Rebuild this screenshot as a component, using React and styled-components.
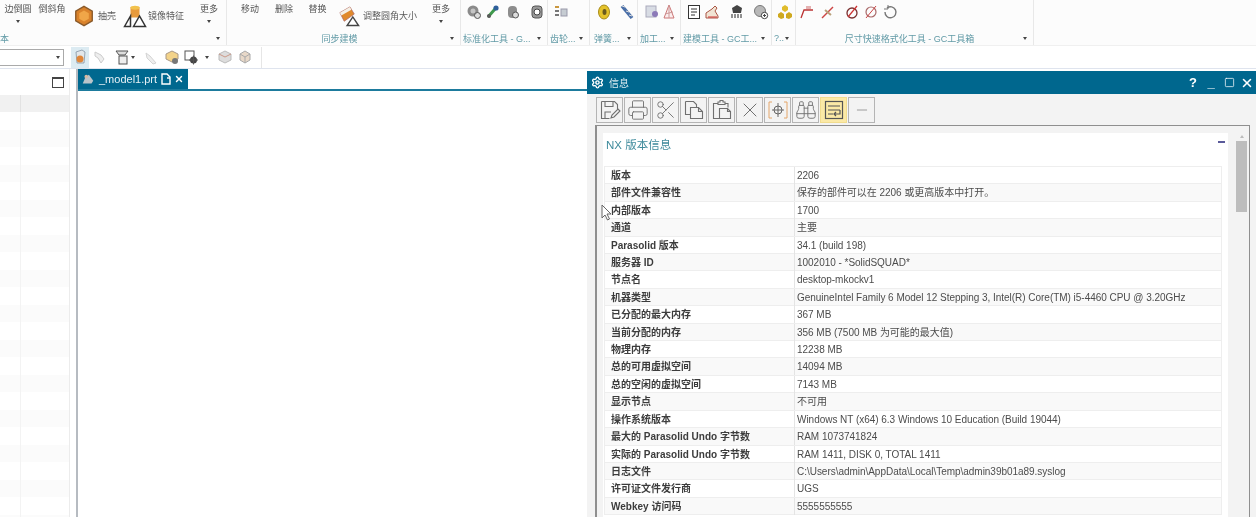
import React from "react";
import styled, { createGlobalStyle } from "styled-components";
import { Printer, Scissors, X, Binoculars, Minus, Settings, Square } from "lucide-react";

const Global = createGlobalStyle`
  html, body { margin: 0; padding: 0; background: #fff; }
  body { font-family: "Liberation Sans", "Noto Sans CJK SC", sans-serif; }
`;

const Root = styled.div`
  position: relative;
  width: 1256px;
  height: 517px;
  overflow: hidden;
  display: flex;
  flex-direction: column;
  background: #fff;
  filter: blur(0.4px);
`;

const Ribbon = styled.div`
  height: 46px;
  flex: none;
  display: flex;
  background: #fcfcfc;
  border-bottom: 1px solid #f0f0f0;
  box-sizing: border-box;
`;

const Group = styled.div`
  width: ${(p) => p.$w}px;
  flex: none;
  display: flex;
  flex-direction: column;
  box-sizing: border-box;
  border-right: ${(p) => (p.$last ? "none" : "1px solid #e8e8e8")};
`;

const Items = styled.div`
  height: 31px;
  display: flex;
  align-items: ${(p) => (p.$big ? "center" : "flex-start")};
  padding-top: ${(p) => (p.$big ? 0 : 4)}px;
  box-sizing: border-box;
`;

const TextItem = styled.div`
  width: ${(p) => p.$w || 34}px;
  margin-left: ${(p) => p.$ml || 0}px;
  flex: none;
  height: 31px;
  padding-top: 3px;
  box-sizing: border-box;
  display: flex;
  flex-direction: column;
  align-items: center;
  gap: 5px;
  font-size: 9px;
  line-height: 12px;
  color: #555;
  white-space: nowrap;
`;

const InlineText = styled.span`
  margin-left: ${(p) => p.$ml || 0}px;
  flex: none;
  font-size: 9px;
  color: #5a5a5a;
  white-space: nowrap;
`;

const Slot = styled.span`
  margin-left: ${(p) => p.$ml || 0}px;
  width: ${(p) => p.$s || 16}px;
  height: ${(p) => p.$s || 16}px;
  flex: none;
  display: inline-flex;
`;

const Arrow = styled.i`
  display: block;
  flex: none;
  width: 0;
  height: 0;
  margin-left: ${(p) => p.$ml || 0}px;
  border-left: 2.5px solid transparent;
  border-right: 2.5px solid transparent;
  border-top: 3px solid #444;
`;

const LabelRow = styled.div`
  height: 14px;
  display: flex;
  align-items: center;
  padding: 0 6px 0 ${(p) => p.$pad ?? 2}px;
  font-size: 9px;
  color: #619aa6;
  white-space: nowrap;
`;

const LabelText = styled.span`
  flex: 1;
  min-width: 0;
  overflow: hidden;
  text-align: ${(p) => (p.$center ? "center" : "left")};
`;

const Bar = styled.div`
  height: 22px;
  flex: none;
  display: flex;
  align-items: center;
  background: #fff;
`;

const Combo = styled.div`
  width: 64px;
  height: 17px;
  flex: none;
  display: flex;
  align-items: center;
  justify-content: flex-end;
  padding-right: 3px;
  box-sizing: border-box;
  border: 1px solid #aaa;
  border-left: none;
`;

const ActiveTile = styled.span`
  margin-left: 7px;
  width: 18px;
  height: 21px;
  flex: none;
  display: flex;
  align-items: center;
  justify-content: center;
  background: #dcebf2;
`;

const BarEnd = styled.span`
  margin-left: 8px;
  width: 1px;
  height: 21px;
  background: #e6e6e6;
`;

const Main = styled.div`
  flex: 1;
  min-height: 0;
  display: flex;
  border-top: 1px solid #dfe4ee;
`;

const LeftPanel = styled.div`
  width: 70px;
  flex: none;
  display: flex;
  flex-direction: column;
  box-sizing: border-box;
  border-right: 1px solid #ececec;
`;

const PanelHead = styled.div`
  height: 26px;
  flex: none;
  display: flex;
  align-items: center;
  justify-content: flex-end;
  padding-right: 5px;
`;

const WindowIcon = styled.span`
  width: 10px;
  height: 8px;
  border: 1px solid #444;
  border-top-width: 2px;
`;

const TreeRow = styled.div`
  height: ${(p) => (p.$head ? 17 : 17.5)}px;
  flex: none;
  display: grid;
  grid-template-columns: 21px 1fr;
  background: ${(p) => (p.$head ? "#f1f1f1" : p.$odd ? "#fbfbfb" : "#fff")};
`;

const TreeCell = styled.div`
  border-right: 1px solid ${(p) => (p.$head ? "#e2e2e2" : "#f3f3f3")};
`;

const Workspace = styled.div`
  width: 511px;
  margin-left: 6px;
  flex: none;
  display: flex;
  flex-direction: column;
  border-left: 2px solid #b6bbc1;
  box-sizing: border-box;
`;

const TabStrip = styled.div`
  height: 22px;
  flex: none;
  box-sizing: border-box;
  border-bottom: 2px solid #1d7b9d;
`;

const Tab = styled.div`
  width: 110px;
  height: 20px;
  display: flex;
  align-items: center;
  background: #00688f;
  color: #e8f2f6;
  font-size: 11px;
`;

const TabName = styled.span`
  margin-left: 4px;
`;

const Dialog = styled.div`
  flex: 1;
  min-width: 0;
  margin-top: 2px;
  display: flex;
  flex-direction: column;
  background: #f3f3f3;
`;

const TitleBar = styled.div`
  height: 23px;
  flex: none;
  display: flex;
  align-items: center;
  padding-left: 4px;
  background: #00678e;
  color: #dcebf1;
  font-size: 10px;
`;

const TitleText = styled.span`
  margin-left: 5px;
  flex: 1;
`;

const TitleBtn = styled.span`
  width: ${(p) => p.$w}px;
  display: flex;
  justify-content: center;
  color: #fff;
  font-size: 13px;
  line-height: 14px;
  font-weight: 700;
`;

const DlgTools = styled.div`
  height: 31px;
  flex: none;
  display: flex;
  align-items: center;
  gap: 1px;
  padding-left: 9px;
  box-sizing: border-box;
`;

const ToolBtn = styled.span`
  width: 27px;
  height: 26px;
  flex: none;
  box-sizing: border-box;
  display: flex;
  align-items: center;
  justify-content: center;
  color: #707070;
  border: 1px solid ${(p) => (p.$on ? "#f1dc8e" : "#b4b4b4")};
  background: ${(p) => (p.$on ? "#fbe9a6" : "#f3f3f3")};
`;

const Frame = styled.div`
  flex: 1;
  min-height: 0;
  margin: 0 6px 0 8px;
  display: flex;
  box-sizing: border-box;
  border: 1px solid #8f8f8f;
  border-left-width: 2px;
  border-bottom: none;
  padding: 7px 0 0 6px;
`;

const Sheet = styled.div`
  position: relative;
  width: 625px;
  flex: none;
  background: #fff;
  padding-left: 1px;
  box-sizing: border-box;
`;

const SheetTitle = styled.div`
  height: 33px;
  padding: 5px 0 0 2px;
  box-sizing: border-box;
  font-size: 11.5px;
  line-height: 14px;
  color: #3f8b9c;
`;

const Collapse = styled.span`
  position: absolute;
  top: 8px;
  right: 3px;
  width: 7px;
  height: 2px;
  background: #5a5a9a;
`;

const Table = styled.div`
  width: 618px;
  border: 1px solid #eeeeee;
  border-bottom: none;
  box-sizing: border-box;
`;

const Row = styled.div`
  height: 17.42px;
  display: grid;
  grid-template-columns: 190px 1fr;
  box-sizing: border-box;
  border-bottom: 1px solid #eeeeee;
  background: ${(p) => (p.$alt ? "#f9f9f9" : "#fff")};
`;

const KeyCell = styled.div`
  padding-left: 6px;
  border-right: 1px solid #e4e4e4;
  font-size: 10px;
  font-weight: 700;
  line-height: 17px;
  color: #3c3c3c;
  white-space: nowrap;
`;

const ValCell = styled.div`
  padding-left: 2px;
  font-size: 10px;
  line-height: 17px;
  color: #4c4c4c;
  white-space: nowrap;
  letter-spacing: -0.03px;
`;

const Scroll = styled.div`
  margin-left: 8px;
  width: 11px;
  flex: none;
  display: flex;
  flex-direction: column;
  align-items: center;
`;

const ScrollUp = styled.i`
  margin-top: 2px;
  width: 0;
  height: 0;
  border-left: 2.5px solid transparent;
  border-right: 2.5px solid transparent;
  border-bottom: 3px solid #bbb;
`;

const Thumb = styled.div`
  margin-top: 3px;
  width: 11px;
  height: 71px;
  background: #bdbdbd;
`;

const Pointer = styled.svg`
  position: absolute;
  left: 601px;
  top: 204px;
  pointer-events: none;
`;

const G = ({ children, s = 16 }) => (
  <svg width={s} height={s} viewBox="0 0 16 16" style={{ display: "block" }}>{children}</svg>
);

const glyphs = {
  shell: <><path d="M8 1l6 3.5v7L8 15l-6-3.5v-7z" fill="#d9822b" stroke="#8a5a2a" /><path d="M8 4l3.5 2v4L8 12l-3.5-2V6z" fill="#f0a648" /></>,
  mirror: <><path d="M5 2h6v7H5z" fill="#e79a3c" /><ellipse cx="8" cy="2.5" rx="3" ry="1.3" fill="#f2c24d" /><path d="M1 15l4-7v7zM7 15l4-7 4 7z" fill="#fff" stroke="#333" /></>,
  blend: <><path d="M2 6l7-4 3 5-7 5z" fill="#e08a2c" stroke="#a66" strokeWidth=".5" /><path d="M2 6l7-4 1 2-7 4z" fill="#f4f0e8" /><path d="M7 15l4-6 4 6z" fill="#fff" stroke="#444" /></>,
  gearA: <><circle cx="7" cy="7" r="5.5" fill="#8b8b8b" /><circle cx="7" cy="7" r="2.5" fill="#c5c5c5" /><circle cx="11.5" cy="11.5" r="3" fill="#ddd" stroke="#555" /></>,
  wrench: <><path d="M3 13l7-8" stroke="#3f9a4c" strokeWidth="3" /><circle cx="11" cy="4" r="2.6" fill="#2e5f9a" /><circle cx="4" cy="12" r="2" fill="#5a5a5a" /></>,
  cyl: <><rect x="3" y="2" width="9" height="12" rx="4" fill="#8d8d8d" /><circle cx="10.5" cy="11" r="3" fill="#ddd" stroke="#555" /></>,
  dial: <><rect x="3" y="2" width="10" height="12" rx="3" fill="#999" stroke="#555" /><circle cx="8" cy="8" r="3" fill="#fff" stroke="#444" /></>,
  teeth: <><rect x="2" y="2" width="4" height="2" fill="#c9973f" /><rect x="2" y="6" width="4" height="2" fill="#777" /><rect x="2" y="10" width="4" height="2" fill="#777" /><rect x="8" y="5" width="6" height="7" fill="#c6ccd2" stroke="#99a" /></>,
  coil: <><ellipse cx="8" cy="8" rx="5.5" ry="7" fill="#e4c22a" stroke="#a98d1a" /><ellipse cx="8.5" cy="8" rx="2" ry="3" fill="#6a5a1c" /></>,
  spring: <><path d="M3 2l10 12" stroke="#4a6fa8" strokeWidth="3.5" /><path d="M3 2l3 1M7 7l3 1M10 11l3 1" stroke="#ddd" /></>,
  part: <><rect x="2" y="2" width="10" height="11" fill="#d8dce4" stroke="#aab" /><circle cx="11" cy="10" r="3" fill="#8c7ab8" /></>,
  cone: <><path d="M8 1L3 14h10z" fill="#fbeeee" stroke="#c77" /><path d="M8 1v13M4 10l8-2" stroke="#c99" /></>,
  doc: <><rect x="2.5" y="1.5" width="11" height="13" fill="#fff" stroke="#333" /><path d="M5 5h6M5 8h6M5 11h4" stroke="#333" /></>,
  tool: <><path d="M2 14V9l6-4 3-3 2 2-2 3 3 5v2z" fill="#f1e4d4" stroke="#a54" /><path d="M4 13h9" stroke="#c33" /></>,
  block: <><path d="M3 4l5-3 5 3-1 5H4z" fill="#444" /><path d="M2 10h12v4H2z" fill="#fff" /><path d="M3 10v4M6 10v4M9 10v4M12 10v4" stroke="#222" /></>,
  ball: <><circle cx="7" cy="7" r="5.5" fill="#b8b8b8" stroke="#777" /><circle cx="11.5" cy="11.5" r="3.2" fill="#fff" stroke="#444" /><path d="M10 11.5h3M11.5 10v3" stroke="#444" /></>,
  cubes: <><path d="M8 1l3 2v3l-3 2-3-2V3z" fill="#e0bc2c" /><path d="M4 8l3 2v4l-3 1-3-2v-3zM12 8l3 2v3l-3 2-3-1v-4z" fill="#cfa91f" /></>,
  flag: <><path d="M2 14l3-8h9" fill="none" stroke="#b33" strokeWidth="1.3" /><path d="M7 3h5M7 5h5" stroke="#c66" /></>,
  dim: <><path d="M2 14L13 3" stroke="#c44" strokeWidth="1.5" /><path d="M5 6l6 5" stroke="#b8a07a" strokeWidth="2" /></>,
  circle: <><circle cx="8" cy="9" r="5" fill="none" stroke="#7a3030" strokeWidth="1.3" /><path d="M4 13l9-11" stroke="#c33" strokeWidth="1.2" /></>,
  circle2: <><circle cx="8" cy="8" r="5" fill="none" stroke="#aa6a6a" strokeWidth="1.2" /><path d="M3 14L13 2" stroke="#c44" /></>,
  undo: <><path d="M5 4a5.5 5.5 0 1 1-2 4" fill="none" stroke="#777" strokeWidth="1.4" /><path d="M6 1v4H2" fill="none" stroke="#777" /></>,
  orange: <><path d="M4 3l6-2 3 2-1 11H5z" fill="#e2e7ea" stroke="#789" strokeWidth=".7" /><circle cx="8" cy="10" r="3.5" fill="#e0873a" /></>,
  bone: <><path d="M4 3l6 3 3 4-3 4-3-5-3-2z" fill="#eee" stroke="#ccc" /></>,
  filter: <><path d="M2 2h12l-3 4H5z" fill="#ddd" stroke="#555" /><rect x="5" y="7" width="8" height="8" fill="#eee" stroke="#555" /></>,
  pin: <><path d="M3 4l4 3 6 7-3 1-6-6z" fill="#eee" stroke="#d4d4d4" /></>,
  box: <><path d="M8 2l6 3v5l-6 3-6-3V5z" fill="#f3d38a" stroke="#a98" /><circle cx="11" cy="12" r="3" fill="#777" /></>,
  frame: <><rect x="2" y="2" width="9" height="9" fill="#fff" stroke="#555" /><circle cx="10.5" cy="11" r="3.5" fill="#444" /><path d="M10.5 6.5v9M6 11h9" stroke="#555" /></>,
  cube1: <><path d="M8 2l6 3v6l-6 3-6-3V5z" fill="#ddd" stroke="#bbb" /><path d="M2 5l6 3 6-3" fill="none" stroke="#c98" /></>,
  cube2: <><path d="M8 2l5 3v6l-5 3-5-3V5z" fill="#e8d8c8" stroke="#aaa" /><path d="M8 8v6M3 5l5 3 5-3" fill="none" stroke="#aaa" /></>,
  model: <><path d="M2 13l3-7 4-3 5 7-2 3z" fill="#b9c4ca" /><circle cx="6" cy="5" r="2" fill="#d8b8a0" /></>,
};

const Glyph = ({ n, ml, s }) => (
  <Slot $ml={ml} $s={s}><G s={s || 16}>{glyphs[n]}</G></Slot>
);

const Save = () => (
  <svg width="22" height="22" viewBox="0 0 22 22" fill="none" stroke="#707070" strokeWidth="1.1">
    <path d="M2.5 2.5h13l3 3v5M2.5 2.5v17h8" />
    <path d="M6 2.5v5h8v-5M6 19v-6h6" />
    <path d="M12 19l1-3 6-6 2 2-6 6z" />
  </svg>
);

const CopyDocs = () => (
  <svg width="22" height="22" viewBox="0 0 22 22" fill="none" stroke="#707070" strokeWidth="1.1">
    <path d="M2.5 2.5h8l3 3v3M2.5 2.5v13h5" />
    <path d="M7.5 8.5h8l4 4v7h-12z" />
    <path d="M15.5 8.5v4h4" />
  </svg>
);

const PasteDocs = () => (
  <svg width="22" height="22" viewBox="0 0 22 22" fill="none" stroke="#707070" strokeWidth="1.1">
    <path d="M7 4.5H2.5v15h6M14 4.5h3v4" />
    <path d="M7 5.5V3h2V1.5h3V3h2v2.5z" />
    <path d="M8.5 9.5h8l3 3v7h-11z" />
    <path d="M16.5 9.5v3h3" />
  </svg>
);

const Target = () => (
  <svg width="22" height="22" viewBox="0 0 22 22" fill="none">
    <path d="M5 3H2v16h3M17 3h3v16h-3" stroke="#e4a66a" />
    <circle cx="11" cy="11" r="4" stroke="#666" />
    <path d="M11 4v14M5 11h12" stroke="#666" />
  </svg>
);

const Wrap = () => (
  <svg width="22" height="22" viewBox="0 0 22 22" fill="none" stroke="#555" strokeWidth="1.2">
    <rect x="2.5" y="2.5" width="17" height="17" />
    <path d="M5 7h12M5 11h12M5 15h5M17 11v4h-6M13 13l-2 2 2 2" />
  </svg>
);

const DocIcon = () => (
  <svg width="10" height="12" viewBox="0 0 10 12" fill="none" stroke="#fff" strokeWidth="1.4">
    <path d="M1 1h5l3 3v7H1z" />
    <path d="M6 5h3" />
  </svg>
);

const rows = [
  ["版本", "2206"],
  ["部件文件兼容性", "保存的部件可以在 2206 或更高版本中打开。"],
  ["内部版本", "1700"],
  ["通道", "主要"],
  ["Parasolid 版本", "34.1 (build 198)"],
  ["服务器 ID", "1002010 - *SolidSQUAD*"],
  ["节点名", "desktop-mkockv1"],
  ["机器类型", "GenuineIntel Family 6 Model 12 Stepping 3, Intel(R) Core(TM) i5-4460 CPU @ 3.20GHz"],
  ["已分配的最大内存", "367 MB"],
  ["当前分配的内存", "356 MB (7500 MB 为可能的最大值)"],
  ["物理内存", "12238 MB"],
  ["总的可用虚拟空间", "14094 MB"],
  ["总的空闲的虚拟空间", "7143 MB"],
  ["显示节点", "不可用"],
  ["操作系统版本", "Windows NT (x64) 6.3 Windows 10 Education (Build 19044)"],
  ["最大的 Parasolid Undo 字节数", "RAM 1073741824"],
  ["实际的 Parasolid Undo 字节数", "RAM 1411, DISK 0, TOTAL 1411"],
  ["日志文件", "C:\\Users\\admin\\AppData\\Local\\Temp\\admin39b01a89.syslog"],
  ["许可证文件发行商", "UGS"],
  ["Webkey 访问码", "5555555555"],
];

const Label = ({ text, center, pad }) => (
  <LabelRow $pad={pad}>
    <LabelText $center={center}>{text}</LabelText>
    <Arrow />
  </LabelRow>
);

const More = ({ ml, text = "更多", w }) => (
  <TextItem $ml={ml} $w={w}>{text}<Arrow /></TextItem>
);

const Plain = ({ ml, text, w }) => <TextItem $ml={ml} $w={w}>{text}</TextItem>;

export default function App() {
  return (
    <Root>
      <Global />
      <Ribbon>
        <Group $w={227}>
          <Items $big>
            <More ml={1} text="边倒圆" />
            <Plain text="倒斜角" />
            <Glyph n="shell" s={22} ml={4} />
            <InlineText $ml={3}>抽壳</InlineText>
            <Glyph n="mirror" s={24} ml={7} />
            <InlineText $ml={1}>镜像特征</InlineText>
            <More ml={8} />
          </Items>
          <Label text="本" pad={0} />
        </Group>
        <Group $w={234}>
          <Items $big>
            <Plain ml={6} text="移动" />
            <Plain text="删除" />
            <Plain text="替换" w={33} />
            <Glyph n="blend" s={23} ml={3} />
            <InlineText $ml={3}>调整圆角大小</InlineText>
            <More ml={7} />
          </Items>
          <Label text="同步建模" center />
        </Group>
        <Group $w={87}>
          <Items>
            <Glyph n="gearA" ml={5} />
            <Glyph n="wrench" ml={3} />
            <Glyph n="cyl" ml={4} />
            <Glyph n="dial" ml={8} />
          </Items>
          <Label text="标准化工具 - G..." />
        </Group>
        <Group $w={42}>
          <Items><Glyph n="teeth" ml={5} /></Items>
          <Label text="齿轮..." />
        </Group>
        <Group $w={48}>
          <Items>
            <Glyph n="coil" ml={6} />
            <Glyph n="spring" ml={7} />
          </Items>
          <Label text="弹簧..." pad={4} />
        </Group>
        <Group $w={43}>
          <Items>
            <Glyph n="part" ml={6} />
            <Glyph n="cone" ml={1} />
          </Items>
          <Label text="加工..." />
        </Group>
        <Group $w={91}>
          <Items>
            <Glyph n="doc" ml={5} />
            <Glyph n="tool" ml={2} />
            <Glyph n="block" ml={9} />
            <Glyph n="ball" ml={8} />
          </Items>
          <Label text="建模工具 - GC工..." />
        </Group>
        <Group $w={24}>
          <Items><Glyph n="cubes" ml={5} /></Items>
          <Label text="?.." />
        </Group>
        <Group $w={238}>
          <Items>
            <Glyph n="flag" ml={3} />
            <Glyph n="dim" ml={5} />
            <Glyph n="circle" ml={8} />
            <Glyph n="circle2" ml={3} />
            <Glyph n="undo" ml={3} />
          </Items>
          <Label text="尺寸快速格式化工具 - GC工具箱" center pad={0} />
        </Group>
      </Ribbon>
      <Bar>
        <Combo><Arrow /></Combo>
        <ActiveTile><Glyph n="orange" /></ActiveTile>
        <Glyph n="bone" ml={2} />
        <Glyph n="filter" ml={7} />
        <Arrow $ml={1} />
        <Glyph n="pin" ml={8} />
        <Glyph n="box" ml={5} />
        <Glyph n="frame" ml={3} />
        <Arrow $ml={6} />
        <Glyph n="cube1" ml={8} />
        <Glyph n="cube2" ml={4} />
        <BarEnd />
      </Bar>
      <Main>
        <LeftPanel>
          <PanelHead><WindowIcon /></PanelHead>
          <TreeRow $head><TreeCell $head /></TreeRow>
          {Array.from({ length: 24 }, (_, i) => (
            <TreeRow key={i} $odd={i % 2 === 1}><TreeCell /></TreeRow>
          ))}
        </LeftPanel>
        <Workspace>
          <TabStrip>
            <Tab>
              <Glyph n="model" ml={3} s={14} />
              <TabName>_model1.prt</TabName>
              <Slot $ml={4} $s={12}><DocIcon /></Slot>
              <Slot $ml={1} $s={10}><X size={10} color="#fff" strokeWidth={3.4} /></Slot>
            </Tab>
          </TabStrip>
        </Workspace>
        <Dialog>
          <TitleBar>
            <Settings size={13} color="#fff" strokeWidth={2.6} />
            <TitleText>信息</TitleText>
            <TitleBtn $w={18}>?</TitleBtn>
            <TitleBtn $w={18}>_</TitleBtn>
            <TitleBtn $w={18}><Square size={11} strokeWidth={1.6} /></TitleBtn>
            <TitleBtn $w={18}><X size={14} strokeWidth={2.6} /></TitleBtn>
          </TitleBar>
          <DlgTools>
            <ToolBtn><Save /></ToolBtn>
            <ToolBtn><Printer size={22} strokeWidth={1} /></ToolBtn>
            <ToolBtn><Scissors size={22} strokeWidth={1} /></ToolBtn>
            <ToolBtn><CopyDocs /></ToolBtn>
            <ToolBtn><PasteDocs /></ToolBtn>
            <ToolBtn><X size={24} strokeWidth={1} /></ToolBtn>
            <ToolBtn><Target /></ToolBtn>
            <ToolBtn><Binoculars size={22} strokeWidth={1} /></ToolBtn>
            <ToolBtn $on><Wrap /></ToolBtn>
            <ToolBtn><Minus size={16} strokeWidth={1} /></ToolBtn>
          </DlgTools>
          <Frame>
            <Sheet>
              <SheetTitle>NX 版本信息</SheetTitle>
              <Collapse />
              <Table>
                {rows.map(([k, v], i) => (
                  <Row key={k} $alt={i % 2 === 1}>
                    <KeyCell>{k}</KeyCell>
                    <ValCell>{v}</ValCell>
                  </Row>
                ))}
              </Table>
            </Sheet>
            <Scroll>
              <ScrollUp />
              <Thumb />
            </Scroll>
          </Frame>
        </Dialog>
      </Main>
      <Pointer width="11" height="17" viewBox="0 0 11 17">
        <path d="M1 1v13l3-3 2.5 5 2-1L6 10h4z" fill="#fff" stroke="#666" />
      </Pointer>
    </Root>
  );
}
